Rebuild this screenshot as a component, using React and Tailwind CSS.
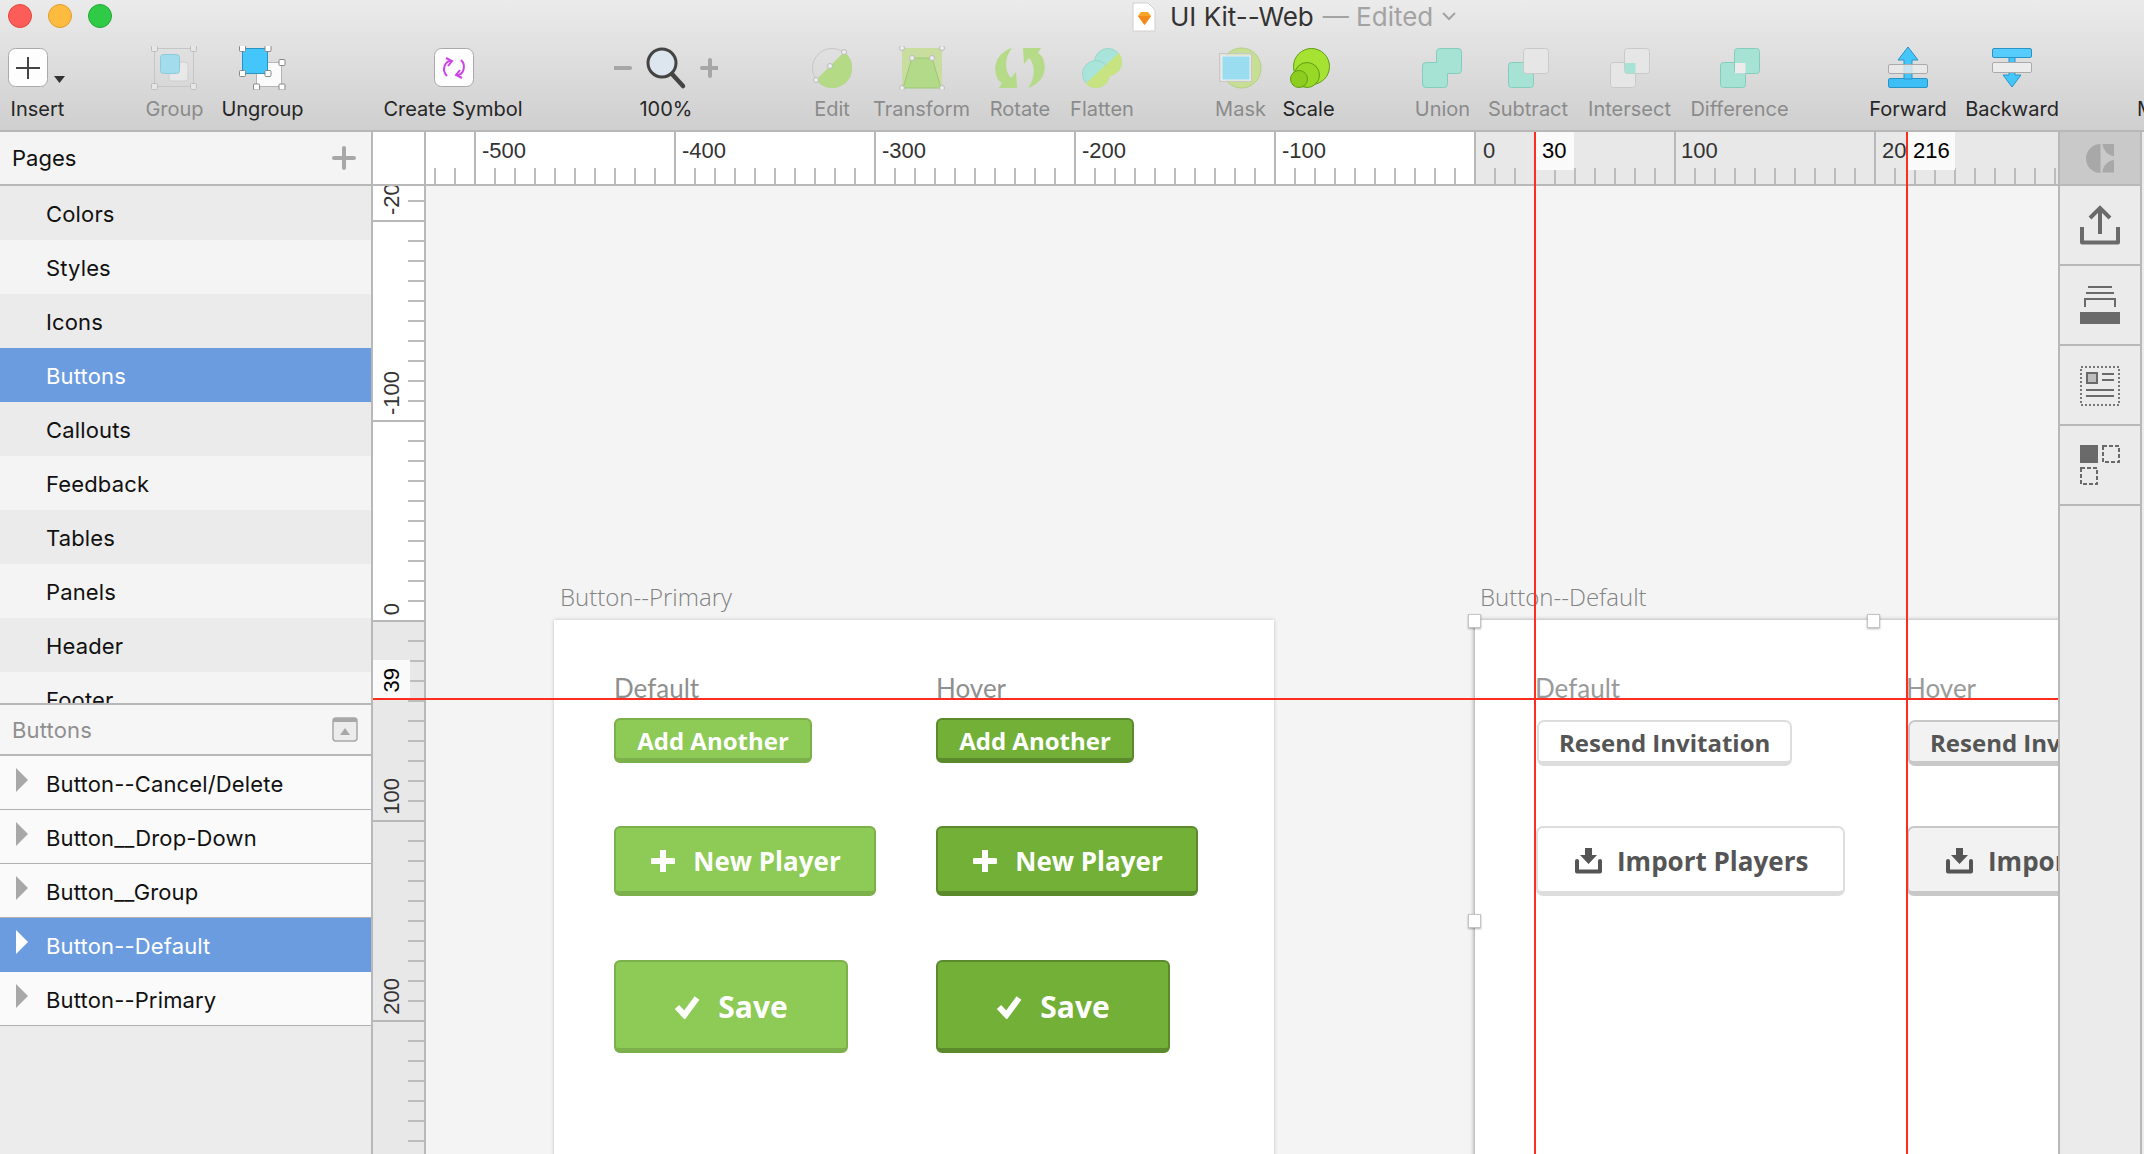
const ui = { fontFamily: 'Inter, "Noto Sans", sans-serif' };

function Tool({ className, label, dim, x, w, children }) {
  return (
    <div className={`flex flex-col items-center shrink-0 ${className}`}>
      <svg width={w} height="44" viewBox={`${x} 46 ${w} 44`} className="shrink-0">{children}</svg>
      <span className={`mt-[7px] text-[20px] leading-[24px] whitespace-nowrap ${dim ? 'text-[#8b8b8b]' : 'text-[#262626]'}`}>{label}</span>
    </div>
  );
}

function H({ x, y, s = 6, c = '#fff', b = '#bdbdbd' }) {
  return <rect x={x - s / 2} y={y - s / 2} width={s} height={s} rx="1" fill={c} stroke={b} />;
}

const TEAL = '#a6e3d5', TEALB = '#84cdbd', GR = '#e6e6e6', GRB = '#c9c9c9';

function Toolbar() {
  return (
    <div className="flex items-start h-[84px]">
      <Tool className="ml-[10px] w-[55px]" label="Insert" x={10} w={60}>
        <rect x="10.5" y="48.5" width="39" height="38" rx="7" fill="#fdfdfd" stroke="#a9a9a9" />
        <path d="M30 57V79M18 68H42" stroke="#444" strokeWidth="2" />
        <path d="M56 76H67L61.500 83Z" fill="#333" />
      </Tool>
      <Tool className="ml-[81px] w-[57px]" label="Group" dim x={146} w={57}>
        <rect x="154.500" y="48.500" width="39" height="38" fill="none" stroke="#c6c6c6" />
        <rect x="169" y="62" width="19" height="19" rx="3" fill="#e8e8e8" stroke="#cfcfcf" />
        <rect x="160.500" y="54.500" width="19" height="19" rx="3" fill="#a3dcec" stroke="#8ccbdc" />
        <H x={154.500} y={48.500} c="#e6e6e6" /><H x={193.500} y={48.500} c="#e6e6e6" /><H x={154.500} y={86.500} c="#e6e6e6" /><H x={193.500} y={86.500} c="#e6e6e6" />
      </Tool>
      <Tool className="ml-[19px] w-[81px]" label="Ungroup" x={222} w={81}>
        <rect x="256.500" y="62.500" width="25" height="24" fill="#fbfbfb" stroke="#b5b5b5" />
        <rect x="242.500" y="48.500" width="25" height="25" fill="#45c6fb" stroke="#2a93c4" />
        <H x={242.500} y={48.500} b="#888" /><H x={268} y={48.500} b="#888" /><H x={242.500} y={73.500} b="#888" /><H x={268} y={73.500} b="#888" />
        <H x={282} y={62.500} b="#888" /><H x={256.500} y={87} b="#888" /><H x={282} y={87} b="#888" />
      </Tool>
      <Tool className="ml-[80px] w-[140px]" label="Create Symbol" x={383} w={140}>
        <rect x="434.500" y="48.500" width="39" height="38" rx="7" fill="#fdfdfd" stroke="#a9a9a9" />
        <g fill="none" stroke="#cc44e8" strokeWidth="2">
          <path d="M452 61C445 60 441 70 447 76" /><path d="M446 58L452 61L448 66" />
          <path d="M456 75C463 76 467 66 461 60" /><path d="M462 78L456 75L460 70" />
        </g>
      </Tool>
      <div className="ml-[91px] w-[104px] flex flex-col items-center shrink-0">
        <svg width="104" height="44" viewBox="614 46 104 44">
          <path d="M614 68H630" stroke="#a6a6a6" strokeWidth="4" strokeLinecap="round" />
          <path d="M702 68H718M710 60V76" stroke="#a6a6a6" strokeWidth="4" strokeLinecap="round" />
          <circle cx="662" cy="63" r="14" fill="#dde6ef" stroke="#444" strokeWidth="3" />
          <path d="M672 74L683 86" stroke="#444" strokeWidth="4.500" strokeLinecap="round" />
        </svg>
        <span className="mt-[7px] text-[20px] leading-[24px] text-[#262626]">100%</span>
      </div>
      <Tool className="ml-[94px] w-[40px]" label="Edit" dim x={812} w={40}>
        <ellipse cx="832" cy="68" rx="19.500" ry="19.500" fill="#e0e0e0" stroke="#c6c6c6" fillOpacity="0.1" />
        <path d="M816 80L844 52C850 56 852 62 852 68C852 80 843 88 832 88C826 88 820 85 816 80Z" fill="#b4da86" />
        <circle cx="816" cy="80" r="2.500" fill="#eee" stroke="#bbb" /><circle cx="844" cy="52" r="2.500" fill="#eee" stroke="#bbb" /><circle cx="830" cy="66" r="2.500" fill="#eee" stroke="#bbb" />
      </Tool>
      <Tool className="ml-[21px] w-[97px]" label="Transform" dim x={873} w={97}>
        <rect x="902" y="48" width="40" height="40" fill="#c9dd9e" />
        <path d="M903 88L912 58H932L941 88Z" fill="#b3da88" stroke="#9cc874" />
        <circle cx="902" cy="48" r="2.500" fill="#eee" stroke="#bbb" /><circle cx="942" cy="48" r="2.500" fill="#eee" stroke="#bbb" />
        <circle cx="902" cy="88" r="2.500" fill="#eee" stroke="#bbb" /><circle cx="942" cy="88" r="2.500" fill="#eee" stroke="#bbb" />
        <circle cx="912" cy="58" r="2.500" fill="#eee" stroke="#bbb" /><circle cx="932" cy="58" r="2.500" fill="#eee" stroke="#bbb" />
      </Tool>
      <Tool className="ml-[19px] w-[62px]" label="Rotate" dim x={989} w={62}>
        <g fill="#b5da88">
          <path d="M1012 48C1000 52 993 62 996 74C997 79 999 81 1002 83L999 88H1017L1016 72L1011 78C1005 72 1004 58 1012 48Z" />
          <path d="M1012 48C1000 52 993 62 996 74C997 79 999 81 1002 83L999 88H1017L1016 72L1011 78C1005 72 1004 58 1012 48Z" transform="rotate(180 1020 68)" />
        </g>
      </Tool>
      <Tool className="ml-[18px] w-[66px]" label="Flatten" dim x={1069} w={66}>
        <defs>
          <clipPath id="flatten-cut"><path d="M1082 87L1122 50V90H1082Z" /></clipPath>
        </defs>
        <circle cx="1108" cy="62" r="13.500" fill="#a9e4da" stroke="#98d6cb" />
        <circle cx="1096" cy="74" r="13.500" fill="#a9e4da" stroke="#98d6cb" />
        <g clipPath="url(#flatten-cut)">
          <circle cx="1108" cy="62" r="14" fill="#c8e382" />
          <circle cx="1096" cy="74" r="14" fill="#c8e382" />
        </g>
      </Tool>
      <Tool className="ml-[81px] w-[49px]" label="Mask" dim x={1216} w={49}>
        <ellipse cx="1241.500" cy="68" rx="19.500" ry="20" fill="#c6df95" stroke="#b3d080" />
        <rect x="1219.500" y="53.500" width="32" height="28" fill="#e6e6e6" fillOpacity="0.55" stroke="#c8c8c8" />
        <rect x="1222" y="56" width="28" height="24" fill="#9adcf0" stroke="#eeeeee" />
      </Tool>
      <Tool className="ml-[18px] w-[51px]" label="Scale" x={1283} w={51}>
        <g stroke="#5f9e14">
          <circle cx="1311.500" cy="66.500" r="18" fill="#a6e232" />
          <circle cx="1307" cy="75" r="12.500" fill="#98d826" />
          <circle cx="1299" cy="79" r="8.500" fill="#8ccd1f" />
        </g>
      </Tool>
      <Tool className="ml-[81px] w-[55px]" label="Union" dim x={1415} w={55}>
        <path d="M1440 48.500H1458Q1461.500 48.500 1461.500 52V70Q1461.500 73.500 1458 73.500H1447.500V84Q1447.500 87.500 1444 87.500H1426Q1422.500 87.500 1422.500 84V66Q1422.500 62.500 1426 62.500H1436.500V52Q1436.500 48.500 1440 48.500Z" fill={TEAL} stroke={TEALB} />
      </Tool>
      <Tool className="ml-[17px] w-[82px]" label="Subtract" dim x={1487} w={82}>
        <rect x="1508.500" y="62.500" width="25" height="25" rx="3" fill={TEAL} stroke={TEALB} />
        <rect x="1523.500" y="48.500" width="25" height="25" rx="3" fill={GR} stroke={GRB} />
      </Tool>
      <Tool className="ml-[18px] w-[85px]" label="Intersect" dim x={1587} w={85}>
        <rect x="1610.500" y="62.500" width="25" height="25" rx="3" fill={GR} stroke={GRB} />
        <rect x="1624.500" y="48.500" width="25" height="25" rx="3" fill={GR} stroke={GRB} />
        <rect x="1625" y="63" width="10.500" height="10.500" fill={TEAL} />
      </Tool>
      <Tool className="ml-[18px] w-[99px]" label="Difference" dim x={1690} w={99}>
        <rect x="1720.500" y="62.500" width="25" height="25" rx="3" fill={TEAL} stroke={TEALB} />
        <rect x="1734.500" y="48.500" width="25" height="25" rx="3" fill={TEAL} stroke={TEALB} />
        <rect x="1735" y="63" width="10.500" height="10.500" fill="#ececec" />
      </Tool>
      <Tool className="ml-[81px] w-[76px]" label="Forward" x={1870} w={76}>
        <rect x="1888.500" y="78.500" width="39" height="9" rx="1.500" fill="#3cbff6" stroke="#2a93c4" />
        <path d="M1908 47L1918 60H1912V79H1904V60H1898Z" fill="#45c6fb" stroke="#2a93c4" strokeLinejoin="round" />
        <rect x="1888.500" y="64.500" width="39" height="9" rx="1.500" fill="#ececec" fillOpacity="0.8" stroke="#aaa" />
      </Tool>
      <Tool className="ml-[20px] w-[92px]" label="Backward" x={1966} w={92}>
        <path d="M2009 57H2015V75H2021L2012 87L2003 75H2009Z" fill="#45c6fb" stroke="#2a93c4" strokeLinejoin="round" />
        <rect x="1992.500" y="48.500" width="39" height="9" rx="1.500" fill="#55ccfb" stroke="#2a93c4" />
        <rect x="1992.500" y="62.500" width="39" height="10" rx="1.500" fill="#ececec" stroke="#aaa" />
      </Tool>
      <span className="ml-[79px] mt-[51px] text-[20px] leading-[24px] text-[#262626]">M</span>
    </div>
  );
}

function Header() {
  return (
    <header className="h-[132px] shrink-0 flex flex-col border-b-2 border-[#b8b8b8] bg-gradient-to-b from-[#ebebeb] to-[#cfcfcf]">
      <div className="relative h-[46px] shrink-0 flex items-start">
        <div className="flex gap-[16px] ml-[8px] mt-[4px]">
          <span className="w-[24px] h-[24px] rounded-full bg-[#fc5d58] border border-[#e0483f]" />
          <span className="w-[24px] h-[24px] rounded-full bg-[#fdbc40] border border-[#e09e2b]" />
          <span className="w-[24px] h-[24px] rounded-full bg-[#2fcb47] border border-[#25a937]" />
        </div>
        <div className="ml-[1020px] mt-[1px] flex items-center h-[32px]">
          <svg width="24" height="30" viewBox="0 0 24 30" className="shrink-0">
            <path d="M1 1H16L23 8V29H1Z" fill="#fff" stroke="#d0d0d0" />
            <path d="M6 14L9 10H16L19 14L12.500 23Z" fill="#f8a52a" />
            <path d="M6 14H19L12.500 23Z" fill="#f28a1b" />
          </svg>
          <span className="ml-[14px] text-[26px] leading-[32px] text-[#333] whitespace-nowrap" >UI Kit--Web</span>
          <span className="ml-[9px] text-[26px] leading-[32px] text-[#a3a3a3] whitespace-nowrap">— Edited</span>
          <svg width="16" height="10" viewBox="0 0 16 10" className="ml-[8px] mt-[-2px]"><path d="M2 2L8 8L14 2" fill="none" stroke="#a3a3a3" strokeWidth="2" /></svg>
        </div>
      </div>
      <Toolbar />
    </header>
  );
}

const pages = ['Colors', 'Styles', 'Icons', 'Buttons', 'Callouts', 'Feedback', 'Tables', 'Panels', 'Header', 'Footer'];
const layers = ['Button--Cancel/Delete', 'Button__Drop-Down', 'Button__Group', 'Button--Default', 'Button--Primary'];

function Sidebar() {
  return (
    <aside className="w-[373px] shrink-0 flex flex-col border-r-2 border-[#b8b8b8] bg-[#ececec] text-[22px] tracking-[0.15px] text-[#111]">
      <div className="h-[54px] shrink-0 flex items-center justify-between pl-[12px] pr-[15px] bg-[#f4f4f4] border-b-2 border-[#b8b8b8]">
        <span className="tracking-normal">Pages</span>
        <svg width="24" height="24" viewBox="0 0 24 24"><path d="M12 2V22M2 12H22" stroke="#a8a8a8" strokeWidth="4" strokeLinecap="round" /></svg>
      </div>
      <div className="h-[517px] shrink-0 overflow-hidden">
        {pages.map((p, i) => (
          <div key={p} className={`h-[54px] flex items-center pl-[46px] pt-[2px] ${p === 'Buttons' ? 'bg-[#6c9ce0] text-white' : i % 2 ? 'bg-[#f4f4f4]' : 'bg-[#ebebeb]'}`}>{p}</div>
        ))}
      </div>
      <div className="h-[53px] shrink-0 flex items-center justify-between pl-[12px] pr-[13px] pt-[1px] bg-[#f6f6f6] border-y-2 border-[#b8b8b8] text-[#8f8f8f]">
        <span>Buttons</span>
        <svg width="26" height="26" viewBox="0 0 26 26">
          <rect x="1" y="1" width="24" height="23" rx="3" fill="#ececec" stroke="#a8a8a8" strokeWidth="1.500" />
          <rect x="1" y="1" width="24" height="4" fill="#a8a8a8" />
          <path d="M8 18L13 11L18 18Z" fill="#a8a8a8" />
        </svg>
      </div>
      {layers.map((l) => {
        const on = l === 'Button--Default';
        return (
          <div key={l} className={`h-[54px] shrink-0 flex items-center pl-[16px] pt-[3px] ${on ? 'bg-[#6c9ce0] text-white' : 'bg-[#fafafa] border-b border-[#b0b0b0]'}`}>
            <svg width="12" height="24" viewBox="0 0 12 24" className="shrink-0 mt-[-9px]"><path d="M0 0L12 12L0 24Z" fill={on ? '#fff' : '#a8a8a8'} /></svg>
            <span className="ml-[18px]">{l}</span>
          </div>
        );
      })}
    </aside>
  );
}

const hTicks = Array.from({ length: 82 }, (_, i) => 435 + i * 20);
const hMajor = [475, 675, 875, 1075, 1275, 1475, 1675, 1875];
const vTicks = Array.from({ length: 48 }, (_, i) => 201 + i * 20);
const vMajor = [221, 421, 621, 821, 1021];

function HRuler() {
  return (
    <div className="relative h-[54px] shrink-0 bg-white border-b-2 border-[#b8b8b8] overflow-hidden text-[22px] leading-[26px] text-[#333] font-['Liberation_Sans',sans-serif]">
      <div className="absolute left-[1102px] right-0 top-0 bottom-0 bg-[#e8e8e8]" />
      <svg width="1685" height="52" viewBox="373 132 1685 52" className="absolute left-0 top-0">
        {hTicks.map((x) => <path key={x} d={`M${x} 168V184`} stroke="#bcbcbc" strokeWidth="2" />)}
        {hMajor.map((x) => <path key={x} d={`M${x} 132V184`} stroke="#b8b8b8" strokeWidth="2" />)}
        <path d="M425 132V184" stroke="#b8b8b8" strokeWidth="2" />
      </svg>
      <span className="absolute left-[109px] top-[6px]">-500</span>
      <span className="absolute left-[309px] top-[6px]">-400</span>
      <span className="absolute left-[509px] top-[6px]">-300</span>
      <span className="absolute left-[709px] top-[6px]">-200</span>
      <span className="absolute left-[909px] top-[6px]">-100</span>
      <span className="absolute left-[1110px] top-[6px]">0</span>
      <span className="absolute left-[1308px] top-[6px]">100</span>
      <span className="absolute left-[1509px] top-[6px] h-[26px] w-[25px] overflow-hidden">200</span>
      <span className="absolute left-[1162px] top-0 w-[39px] h-[38px] pl-[7px] pt-[6px] bg-[#fafafa] text-black">30</span>
      <span className="absolute left-[1534px] top-0 w-[48px] h-[38px] pl-[6px] pt-[6px] bg-[#fafafa] text-black">216</span>
    </div>
  );
}

function VRuler() {
  return (
    <div className="relative w-[53px] shrink-0 bg-[#e8e8e8] border-r-2 border-[#b8b8b8] overflow-hidden text-[22px] text-[#333] font-['Liberation_Sans',sans-serif]">
      <div className="absolute left-0 right-0 top-0 h-[435px] bg-white" />
      <svg width="51" height="968" viewBox="373 186 51 968" className="absolute left-0 top-0">
        {vTicks.map((y) => <path key={y} d={`M408 ${y}H424`} stroke="#bcbcbc" strokeWidth="2" />)}
        {vMajor.map((y) => <path key={y} d={`M373 ${y}H424`} stroke="#b8b8b8" strokeWidth="2" />)}
      </svg>
      <span className="absolute left-[6px] bottom-[939px] leading-[26px] [writing-mode:vertical-rl] rotate-180">-200</span>
      <span className="absolute left-[6px] bottom-[739px] leading-[26px] [writing-mode:vertical-rl] rotate-180">-100</span>
      <span className="absolute left-[6px] bottom-[539px] leading-[26px] [writing-mode:vertical-rl] rotate-180">0</span>
      <span className="absolute left-[6px] bottom-[339px] leading-[26px] [writing-mode:vertical-rl] rotate-180">100</span>
      <span className="absolute left-[6px] bottom-[139px] leading-[26px] [writing-mode:vertical-rl] rotate-180">200</span>
      <div className="absolute left-0 top-[474px] w-[37px] h-[39px] bg-[#fafafa]" />
      <span className="absolute left-[6px] bottom-[462px] leading-[26px] text-black [writing-mode:vertical-rl] rotate-180">39</span>
    </div>
  );
}

function Plus() {
  return <svg width="24" height="22" viewBox="0 0 24 22" className="shrink-0"><path d="M12 1V21M2 11H22" stroke="#fff" strokeWidth="6" strokeLinecap="round" /></svg>;
}
function Check() {
  return <svg width="26" height="24" viewBox="0 0 26 24" className="shrink-0"><path d="M3 12L10.500 20L23 3" fill="none" stroke="#fff" strokeWidth="6" /></svg>;
}
function Down() {
  return (
    <svg width="27" height="26" viewBox="0 0 27 26" className="shrink-0">
      <path d="M10 0H17V7H22L13.500 16L5 7H10Z" fill="#555" />
      <path d="M2 13V23.500H25V13" fill="none" stroke="#555" strokeWidth="4" strokeLinejoin="round" strokeLinecap="round" />
    </svg>
  );
}

const pFont = "font-['Open_Sans',sans-serif] font-bold";

function GreenCol({ hover, title }) {
  const c = hover ? 'bg-[#72b038] border-[#5a8a2c]' : 'bg-[#8dca56] border-[#7cb04b]';
  const base = `flex items-center justify-center rounded-[6px] border-2 border-b-[5px] text-white ${pFont} ${c}`;
  return (
    <div className="flex flex-col items-start w-[322px] shrink-0">
      <div className="h-[36px] text-[26px] leading-[36px] text-[#8f8f8f] font-['Lato',sans-serif]">{title}</div>
      <div className={`${base} mt-[12px] w-[198px] h-[45px] text-[24px] pt-[3px]`}>Add Another</div>
      <div className={`${base} mt-[63px] w-[262px] h-[70px] text-[26px] pl-[2px] pt-[3px]`}><Plus /><span className="ml-[18px]">New Player</span></div>
      <div className={`${base} mt-[64px] w-[234px] h-[93px] text-[30px] pt-[3px]`}><Check /><span className="ml-[18px]">Save</span></div>
    </div>
  );
}

function GrayCol({ hover, title, w }) {
  const c = hover ? 'bg-[#f2f2f2]' : 'bg-white';
  const b = hover ? 'border-[#c8c8c8]' : 'border-[#dddddd]';
  const base = `flex items-center rounded-[7px] border-2 border-b-[5px] text-[#555] whitespace-nowrap ${pFont} ${c} ${b}`;
  return (
    <div className={`flex flex-col items-start shrink-0 ${w}`}>
      <div className="h-[36px] text-[26px] leading-[36px] text-[#9a9a9a] font-['Lato',sans-serif]">{title}</div>
      <div className={`${base} mt-[14px] ml-[2px] w-[255px] h-[46px] pl-[20px] pt-[2px] text-[24px]`}>Resend Invitation</div>
      <div className={`${base} mt-[60px] ml-[1px] w-[309px] h-[70px] pl-[37px] pt-[3px] text-[26px]`}><Down /><span className="ml-[15px]">Import Players</span></div>
    </div>
  );
}

function Handle({ className }) {
  return <span className={`absolute w-[13px] h-[14px] bg-white border border-[#c4c4c4] shadow-[0_1px_2px_rgba(0,0,0,0.3)] ${className}`} />;
}

const labelFont = "absolute top-[397px] text-[24px] leading-[28px] text-[#828282] font-['Open_Sans',sans-serif] font-light";

function Canvas() {
  return (
    <div className="relative flex-1 bg-[#f4f4f4] overflow-hidden">
      <span className={`left-[134px] ${labelFont}`}>Button--Primary</span>
      <div className="absolute left-[128px] top-[434px] w-[720px] h-[540px] bg-white shadow-[0_0_4px_rgba(0,0,0,0.2)] flex pl-[60px] pt-[50px]">
        <GreenCol title="Default" />
        <GreenCol title="Hover" hover />
      </div>
      <span className={`left-[1054px] ${labelFont}`}>Button--Default</span>
      <div className="absolute left-[1049px] top-[434px] w-[720px] h-[540px] bg-white shadow-[-1px_0_4px_rgba(0,0,0,0.35)] flex pl-[60px] pt-[50px]">
        <GrayCol title="Default" w="w-[371px]" />
        <GrayCol title="Hover" hover w="w-[320px]" />
      </div>
      <Handle className="left-[1042px] top-[428px]" />
      <Handle className="left-[1441px] top-[428px]" />
      <Handle className="left-[1042px] top-[728px]" />
    </div>
  );
}

function RightPanel() {
  const cell = 'h-[80px] shrink-0 flex items-center justify-center border-b-2 border-[#b8b8b8] bg-[#ebebeb]';
  return (
    <aside className="w-[86px] shrink-0 flex bg-[#ececec]">
      <div className="w-[84px] shrink-0 border-x-2 border-[#b8b8b8] flex flex-col bg-[#ebebeb]">
        <div className="h-[54px] shrink-0 flex items-center justify-center bg-[#c9c9c9] border-b-2 border-[#b8b8b8]">
          <svg width="30" height="30" viewBox="2085 143 30 30">
            <path d="M2100.500 144A14.500 14.500 0 0 0 2100.500 173Z" fill="#a8a8a8" />
            <path d="M2102.500 144H2114V156.500A14 14 0 0 1 2102.500 144Z" fill="#a8a8a8" />
            <path d="M2102.500 172.500H2114V160A13 13 0 0 0 2102.500 172.500Z" fill="#a8a8a8" />
          </svg>
        </div>
        <div className={cell}>
          <svg width="42" height="42" viewBox="0 0 42 42">
            <path d="M3 23V38.500H39V23" fill="none" stroke="#6a6a6a" strokeWidth="4" strokeLinejoin="round" />
            <path d="M21 30V4M11 14L21 4L31 14" fill="none" stroke="#6a6a6a" strokeWidth="4" />
          </svg>
        </div>
        <div className={cell}>
          <svg width="40" height="38" viewBox="0 0 40 38">
            <path d="M8 1H32M6 7H34" stroke="#6a6a6a" strokeWidth="2" />
            <path d="M5 21V13H35V21" fill="none" stroke="#6a6a6a" strokeWidth="2" />
            <rect x="0" y="26" width="40" height="12" fill="#6a6a6a" />
          </svg>
        </div>
        <div className={cell}>
          <svg width="40" height="40" viewBox="0 0 40 40" className="mt-[2px]">
            <rect x="1" y="1" width="38" height="38" fill="none" stroke="#777" strokeWidth="2" strokeDasharray="2 2" />
            <rect x="7" y="7" width="10" height="10" fill="#bdbdbd" stroke="#6a6a6a" strokeWidth="2" />
            <path d="M22 8H34M22 14H34M6 24H34M6 30H34" stroke="#6a6a6a" strokeWidth="2" />
          </svg>
        </div>
        <div className={cell}>
          <svg width="40" height="40" viewBox="0 0 40 40">
            <rect x="0" y="0" width="18" height="18" fill="#6a6a6a" />
            <rect x="23" y="1" width="16" height="16" fill="none" stroke="#6a6a6a" strokeWidth="2" strokeDasharray="4 2" />
            <rect x="1" y="23" width="16" height="16" fill="none" stroke="#6a6a6a" strokeWidth="2" strokeDasharray="4 2" />
          </svg>
        </div>
      </div>
    </aside>
  );
}

export default function App() {
  return (
    <div className="w-[2144px] h-[1154px] flex flex-col overflow-hidden" style={ui}>
      <Header />
      <div className="flex flex-1 min-h-0">
        <Sidebar />
        <main className="relative w-[1685px] shrink-0 flex flex-col overflow-hidden">
          <HRuler />
          <div className="flex flex-1 min-h-0">
            <VRuler />
            <Canvas />
          </div>
          <div className="absolute left-0 right-0 top-[566px] h-[2px] bg-[#ff2d20]" />
          <div className="absolute left-[1161px] top-0 bottom-0 w-[2px] bg-[#ff2d20]" />
          <div className="absolute left-[1533px] top-0 bottom-0 w-[2px] bg-[#ff2d20]" />
        </main>
        <RightPanel />
      </div>
    </div>
  );
}
